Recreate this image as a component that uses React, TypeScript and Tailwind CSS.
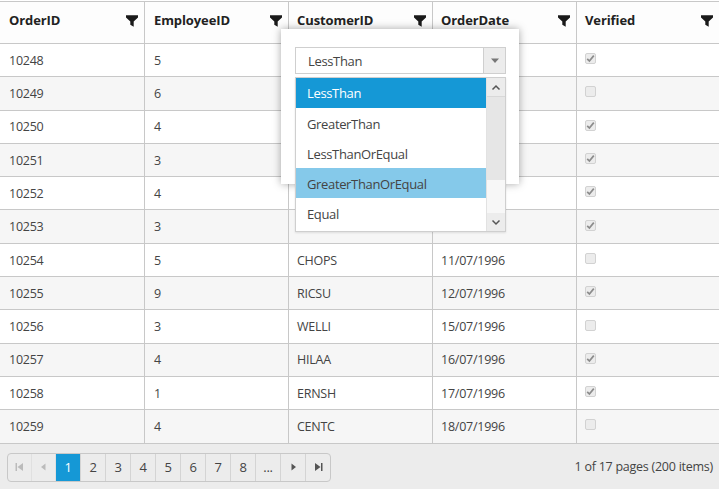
const rows: [string, string, string, string, boolean][] = [
  ["10248", "5", "", "", true],
  ["10249", "6", "", "", false],
  ["10250", "4", "", "", true],
  ["10251", "3", "", "", true],
  ["10252", "4", "", "", true],
  ["10253", "3", "", "10/07/1996", true],
  ["10254", "5", "CHOPS", "11/07/1996", false],
  ["10255", "9", "RICSU", "12/07/1996", true],
  ["10256", "3", "WELLI", "15/07/1996", false],
  ["10257", "4", "HILAA", "16/07/1996", true],
  ["10258", "1", "ERNSH", "17/07/1996", true],
  ["10259", "4", "CENTC", "18/07/1996", false],
];
const headers = ["OrderID", "EmployeeID", "CustomerID", "OrderDate", "Verified"];

function Funnel() {
  return (
    <svg width="12" height="12" viewBox="0 0 12 12" className="shrink-0">
      <path d="M0 0.3H12V2.4L7.7 6.4V11.8L4.3 9.8V6.4L0 2.4Z" fill="#1a1a1a" />
    </svg>
  );
}

function Check({ on }: { on: boolean }) {
  return (
    <div className="w-[11px] h-[11px] rounded-[2px] border border-[#d2d2d2] bg-[#ececec] flex items-center justify-center">
      {on && (
        <svg width="9" height="9" viewBox="0 0 9 9">
          <path d="M1.2 4.8L3.4 7L7.8 1.6" fill="none" stroke="#8c8c8c" strokeWidth="1.7" />
        </svg>
      )}
    </div>
  );
}

function Glyph({ d }: { d: string }) {
  return (
    <svg width="9" height="10" viewBox="0 0 9 10">
      <path d={d} fill="#8a8a8a" />
    </svg>
  );
}

function PagerBtn({ children, active, dim, narrow }: { children: React.ReactNode; active?: boolean; dim?: boolean; narrow?: boolean }) {
  return (
    <div
      className={
        (narrow ? "w-[24px] " : "w-[25px] ") +
        "h-full flex items-center justify-center border-r border-[#d4d4d4] last:border-r-0 text-[13px] tracking-[-0.2px] " +
        (active ? "bg-[#1598d6] text-white" : dim ? "opacity-50" : "text-[#444]")
      }
    >
      {children}
    </div>
  );
}

export default function App() {
  const font = { fontFamily: '"Open Sans", "Noto Sans", sans-serif' };
  const cols = "grid grid-cols-[145px_144px_144px_144px_1fr]";
  return (
    <div className="relative w-[719px] h-[489px] bg-white overflow-hidden text-[#444] text-[12.5px] tracking-[-0.25px] flex flex-col" style={font}>
      <div className="h-[1px] mt-[1px] bg-[#c8c8c8]" />
      <div className={cols + " h-[42px] bg-[#fdfdfd] border-b border-[#c8c8c8]"}>
        {headers.map((h, i) => (
          <div key={h} className={"flex items-center justify-between pr-[6px] border-r border-[#c8c8c8] last:border-r-0 " + (i < 2 ? "pl-[9px]" : "pl-[8px]")}>
            <span className="font-bold text-[13px] text-[#222] tracking-[-0.1px] pb-[4px]">{h}</span>
            <span className="pb-[4px]"><Funnel /></span>
          </div>
        ))}
      </div>
      {rows.map((r, i) => (
        <div
          key={r[0]}
          className={cols + " h-[33.3px] border-b border-[#c8c8c8] " + (i % 2 ? "bg-[#f6f6f6]" : "bg-white")}
        >
          {r.slice(0, 4).map((c, j) => (
            <div key={j} className={"flex items-center pt-[2px] border-r border-[#c8c8c8] " + (j < 2 ? "pl-[9px]" : "pl-[8px]")}>
              {c as string}
            </div>
          ))}
          <div className="flex items-center pl-[8px] pb-[3px]">
            <Check on={r[4]} />
          </div>
        </div>
      ))}
      <div className="flex-1 flex items-center justify-between bg-[#ececec] pl-[7px] pr-[6px] pt-[2px]">
        <div className="flex h-[29px] border border-[#c8c8c8] rounded-[4px] overflow-hidden">
          <PagerBtn dim narrow><Glyph d="M0.5 1H2V9H0.5ZM8 1V9L2.5 5Z" /></PagerBtn>
          <PagerBtn dim narrow><Glyph d="M6.5 1.5V8.5L2 5Z" /></PagerBtn>
          <PagerBtn active>1</PagerBtn>
          {["2", "3", "4", "5", "6", "7", "8"].map((n) => (
            <PagerBtn key={n}>{n}</PagerBtn>
          ))}
          <PagerBtn>...</PagerBtn>
          <PagerBtn><svg width="9" height="10" viewBox="0 0 9 10"><path d="M2.5 1.5V8.5L7 5Z" fill="#555" /></svg></PagerBtn>
          <PagerBtn narrow><svg width="9" height="10" viewBox="0 0 9 10"><path d="M1 1V9L6.5 5ZM7 1H8.5V9H7Z" fill="#555" /></svg></PagerBtn>
        </div>
        <span>1 of 17 pages (200 items)</span>
      </div>

      <div className="absolute left-[281px] top-[29px] w-[238px] h-[155px] bg-white shadow-[0_0_8px_rgba(0,0,0,0.35)]" />
      <div className="absolute left-[295px] top-[47px] w-[211px] h-[27px] flex border border-[#cfcfcf] bg-white text-[13px] tracking-[-0.35px]">
        <div className="flex-1 flex items-center pl-[12px] pt-[2px]">LessThan</div>
        <div className="w-[22px] bg-[#ececec] border-l border-[#cfcfcf] flex items-center justify-center">
          <svg width="10" height="6" viewBox="0 0 10 6"><path d="M1 0.5H9L5 5Z" fill="#777" /></svg>
        </div>
      </div>
      <div className="absolute left-[295px] top-[77px] w-[211px] h-[155px] flex border border-[#cfcfcf] bg-white text-[13px] tracking-[-0.35px] shadow-[0_1px_2px_rgba(0,0,0,0.1)]">
        <div className="w-[190px] flex flex-col">
          <div className="h-[30px] flex items-center pl-[11px] pt-[1px] bg-[#1598d6] text-white">LessThan</div>
          <div className="h-[30px] flex items-center pl-[11px] pt-[3px]">GreaterThan</div>
          <div className="h-[30px] flex items-center pl-[11px] pt-[3px]">LessThanOrEqual</div>
          <div className="h-[30px] flex items-center pl-[11px] pt-[3px] bg-[#85c9ea]">GreaterThanOrEqual</div>
          <div className="h-[30px] flex items-center pl-[11px] pt-[3px]">Equal</div>
        </div>
        <div className="flex-1 flex flex-col border-l border-[#e2e2e2] bg-[#f7f7f7]">
          <div className="h-[19px] bg-[#ececec] border-b border-[#d8d8d8] flex items-center justify-center">
            <svg width="10" height="7" viewBox="0 0 10 7"><path d="M1.5 5.5L5 2L8.5 5.5" fill="none" stroke="#555" strokeWidth="1.5" /></svg>
          </div>
          <div className="h-[83px] bg-[#e6e6e6]" />
          <div className="flex-1" />
          <div className="h-[18px] bg-[#ececec] flex items-center justify-center">
            <svg width="10" height="7" viewBox="0 0 10 7"><path d="M1.5 1.5L5 5L8.5 1.5" fill="none" stroke="#555" strokeWidth="1.5" /></svg>
          </div>
        </div>
      </div>
    </div>
  );
}
